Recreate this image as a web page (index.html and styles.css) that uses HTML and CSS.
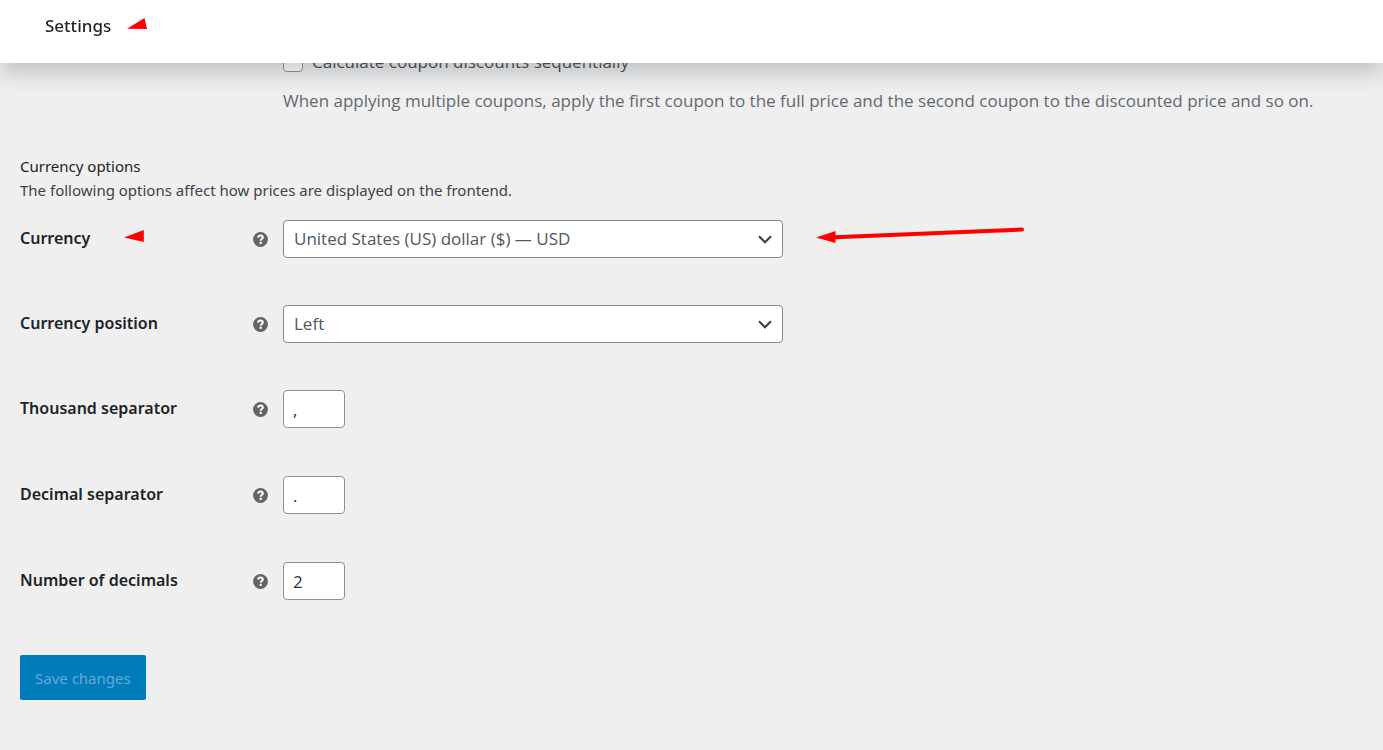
FILE: index.html
```html
<!DOCTYPE html>
<html lang="en">
<head>
<meta charset="utf-8">
<meta name="viewport" content="width=device-width, initial-scale=1">
<title>Settings</title>
<link rel="stylesheet" href="styles.css">
</head>
<body>
<svg class="sprite" aria-hidden="true">
  <symbol id="help" viewBox="0 0 16 16">
    <circle cx="8.500" cy="7.500" r="7.400" fill="#646464"/>
    <path d="M6.100 5.600C6.200 4.200 7.200 3.600 8.500 3.600c1.400 0 2.300.8 2.300 1.900 0 1.500-2.100 1.600-2.100 3.200" fill="none" stroke="#fff" stroke-width="2"/>
    <rect x="7.600" y="9.800" width="2.200" height="2.100" fill="#fff"/>
  </symbol>
  <symbol id="chevron" viewBox="0 0 14 9">
    <path d="M1 1.300l6 6 6-6" fill="none" stroke="#3c434a" stroke-width="2.200"/>
  </symbol>
</svg>

<header class="header">
  <h1 class="header-title">Settings</h1>
  <svg class="pointer" viewBox="0 0 22 14" aria-hidden="true"><path d="M1 11.700L18.500 1l2.500 11z" fill="#f00"/></svg>
</header>

<main class="content">
  <form class="form">
    <div class="coupon">
      <label class="check-label"><input class="check" type="checkbox">Calculate coupon discounts sequentially</label>
      <p class="coupon-help">When applying multiple coupons, apply the first coupon to the full price and the second coupon to the discounted price and so on.</p>
    </div>

    <h2 class="section-title">Currency options</h2>
    <p class="section-text">The following options affect how prices are displayed on the frontend.</p>

    <div class="rows">
      <div class="row">
        <div class="name"><label for="currency">Currency</label>
          <svg class="pointer pointer-name" viewBox="0 0 22 14" aria-hidden="true"><path d="M1 8.400L20.800 1v12z" fill="#f00"/></svg>
        </div>
        <svg class="help" role="img" aria-label="Help"><use href="#help"/></svg>
        <div class="select-wrap">
          <select class="select" id="currency"><option>United States (US) dollar ($) — USD</option></select>
          <svg class="chevron" aria-hidden="true"><use href="#chevron"/></svg>
        </div>
        <svg class="arrow" viewBox="0 0 210 18" aria-hidden="true"><path d="M19 12.200L206 4.500" stroke="#f00" stroke-width="4" stroke-linecap="round"/><path d="M0 12.500L19.500 6v12z" fill="#f00"/></svg>
      </div>
      <div class="row">
        <div class="name"><label for="position">Currency position</label></div>
        <svg class="help" role="img" aria-label="Help"><use href="#help"/></svg>
        <div class="select-wrap">
          <select class="select" id="position"><option>Left</option></select>
          <svg class="chevron" aria-hidden="true"><use href="#chevron"/></svg>
        </div>
      </div>
      <div class="row row-text">
        <div class="name"><label for="thousand">Thousand separator</label></div>
        <svg class="help" role="img" aria-label="Help"><use href="#help"/></svg>
        <input class="text" id="thousand" type="text" value=",">
      </div>
      <div class="row row-text">
        <div class="name"><label for="decimal">Decimal separator</label></div>
        <svg class="help" role="img" aria-label="Help"><use href="#help"/></svg>
        <input class="text" id="decimal" type="text" value=".">
      </div>
      <div class="row row-text">
        <div class="name"><label for="decimals">Number of decimals</label></div>
        <svg class="help" role="img" aria-label="Help"><use href="#help"/></svg>
        <input class="text" id="decimals" type="text" inputmode="numeric" value="2">
      </div>
    </div>

    <button class="save" type="submit" disabled>Save changes</button>
  </form>
</main>
</body>
</html>
```
FILE: styles.css
```css
* { box-sizing: border-box; }

body {
  margin: 0;
  background: #efefef;
  color: #1d2327;
  font: 400 17px/24px "Open Sans", "Noto Sans", sans-serif;
}

h1, h2, p { margin: 0; }

.sprite {
  position: absolute;
  width: 0;
  height: 0;
}

.header {
  position: fixed;
  z-index: 2;
  top: 0;
  left: 0;
  right: 0;
  display: flex;
  gap: 15px;
  height: 63px;
  padding: 14px 45px;
  background: #fff;
  box-shadow: 0 10px 20px 0 rgba(85, 93, 102, 0.3);
}

.header-title {
  font-family: "Noto Sans", "Open Sans", sans-serif;
  font-size: 17px;
  line-height: 24px;
  font-weight: 500;
}

.pointer {
  width: 22px;
  height: 14px;
  margin-top: 3px;
}

.content { padding: 50px 20px; }

.coupon { margin-left: 263px; }

.check-label {
  display: flex;
  align-items: center;
  gap: 9px;
  color: #3c434a;
}

.check {
  appearance: none;
  width: 20px;
  height: 20px;
  margin: 0;
  border: 1px solid #8c8f94;
  border-radius: 4px;
  background: #fff;
}

.coupon-help {
  margin-top: 15px;
  color: #646970;
}

.section-title {
  margin-top: 41px;
  font-family: "Noto Sans", "Open Sans", sans-serif;
  font-size: 15px;
  line-height: 24px;
  font-weight: 400;
}

.section-text {
  color: #3c434a;
  font-family: "Noto Sans", "Open Sans", sans-serif;
  font-size: 15px;
  line-height: 24px;
}

.rows { margin-top: 18px; }

.row {
  display: flex;
  align-items: flex-start;
  height: 85px;
}

.row-text { height: 86px; }

.name {
  display: flex;
  align-items: flex-start;
  width: 232px;
  padding-top: 6px;
  font-family: "Noto Sans", "Open Sans", sans-serif;
  font-size: 16px;
  font-weight: 600;
}

.pointer-name { margin-left: 33px; }

.help {
  width: 16px;
  height: 16px;
  margin: 12px 15px 0 0;
}

.select-wrap {
  position: relative;
  width: 500px;
}

.select,
.text {
  height: 38px;
  border: 1px solid #8c8f94;
  border-radius: 4px;
  background: #fff;
  color: #2c3338;
  font: inherit;
}

.select {
  display: block;
  appearance: none;
  width: 100%;
  padding: 0 32px 0 10px;
  border-color: #7e8993;
  color: #50575e;
}

.text {
  width: 62px;
  padding: 0 9px;
}

.chevron {
  position: absolute;
  top: 15px;
  right: 11px;
  width: 14px;
  height: 9px;
  pointer-events: none;
}

.arrow {
  width: 210px;
  height: 18px;
  margin: 5px 0 0 33px;
}

.save {
  display: block;
  height: 45px;
  margin-top: 7px;
  padding: 0 15px;
  border: 0;
  border-radius: 2px;
  background: #007cba;
  color: #66a9dc;
  font: 400 15px/24px "Noto Sans", "Open Sans", sans-serif;
}
```
